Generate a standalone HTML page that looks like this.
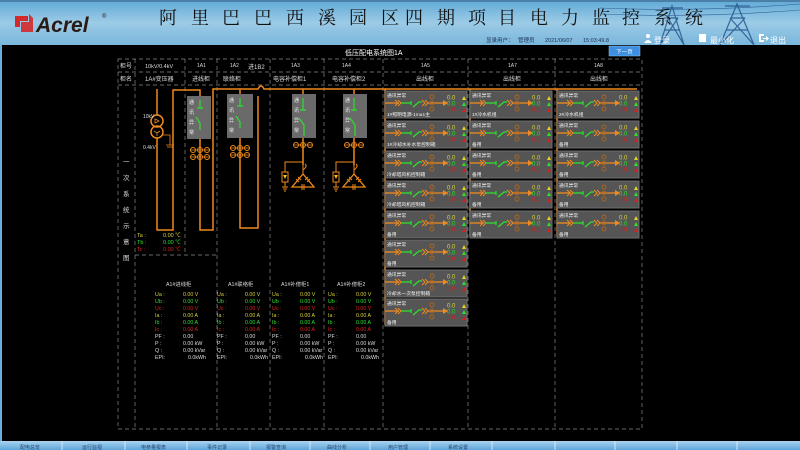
<!DOCTYPE html>
<html><head><meta charset="utf-8"><style>
html,body{margin:0;padding:0;background:#000;width:800px;height:450px;overflow:hidden}
svg{display:block}
text{font-family:"Liberation Sans","Noto Sans CJK SC",sans-serif}
</style></head><body>
<svg width="800" height="450" viewBox="0 0 800 450" xmlns="http://www.w3.org/2000/svg">
<defs>
<linearGradient id="hd" x1="0" y1="0" x2="0" y2="1"><stop offset="0" stop-color="#5fa9d6"/><stop offset="0.5" stop-color="#9ccbe6"/><stop offset="1" stop-color="#79b6dc"/></linearGradient>
<linearGradient id="ft" x1="0" y1="0" x2="0" y2="1"><stop offset="0" stop-color="#a9d3f0"/><stop offset="1" stop-color="#5ea6da"/></linearGradient>
<g id="cg">
<rect x="0" y="0" width="82" height="27" fill="#555" stroke="#6e6e6e" stroke-width="1"/>
<line x1="0" y1="12" x2="14" y2="12" stroke="#f08a1c" stroke-width="1.3"/>
<path d="M10 9 L13 12 L10 15 M13 9 L16 12 L13 15" stroke="#f08a1c" fill="none" stroke-width="1"/>
<line x1="16" y1="12" x2="26" y2="12" stroke="#2de02d" stroke-width="1.3"/>
<path d="M26 10 L26 14" stroke="#2de02d" stroke-width="1.2"/>
<path d="M28 16 L34 11 H37" stroke="#2de02d" fill="none" stroke-width="1.3"/>
<path d="M37 9 L40 12 L37 15 M40 9 L43 12 L40 15" stroke="#f08a1c" fill="none" stroke-width="1"/>
<line x1="43" y1="12" x2="60" y2="12" stroke="#f08a1c" stroke-width="1.3"/>
<path d="M58 9 L63 12 L58 15 Z" fill="#f08a1c"/>
<circle cx="47" cy="6" r="2" fill="none" stroke="#b0651e" stroke-width="0.9"/>
<circle cx="47" cy="12" r="2" fill="none" stroke="#b0651e" stroke-width="0.9"/>
<circle cx="47" cy="18" r="2" fill="none" stroke="#b0651e" stroke-width="0.9"/>
<path d="M77 9 L79 5 L81 9 Z" fill="#e6d21e"/>
<path d="M77 15 L79 11 L81 15 Z" fill="#2de02d"/>
<path d="M77 21 L79 17 L81 21 Z" fill="#d82020"/>
<text x="62" y="8.5" font-size="6" fill="#d8d23a">0.0</text>
<text x="62" y="14.5" font-size="6" fill="#2de02d">0.0</text>
<text x="62" y="20.5" font-size="6" fill="#d82020">0.0</text>
</g>
<g id="dots3"><circle cx="0" cy="0" r="2.5" fill="none" stroke="#f08a1c"/><circle cx="7" cy="0" r="2.5" fill="none" stroke="#f08a1c"/><circle cx="14" cy="0" r="2.5" fill="none" stroke="#f08a1c"/><path d="M-2.5 0 H16.5" stroke="#f08a1c" stroke-width="0.7"/></g>
<g id="cap">
<path d="M0 0 V12" stroke="#f08a1c" fill="none"/>
<path d="M0 12 q5 -4 2 -6" stroke="#f08a1c" fill="none"/>
<path d="M0 16 L-11 29 H11 Z" stroke="#f08a1c" fill="none" stroke-width="1.3"/>
<path d="M0 12 V16" stroke="#f08a1c"/>
<path d="M-7 21 l3 3 M-5 19 l3 3 M7 21 l-3 3 M5 19 l-3 3 M-1 26 v6 M1 26 v6" stroke="#f08a1c" stroke-width="1"/>
<path d="M0 4 H-18 V14" stroke="#f08a1c" fill="none"/>
<rect x="-21" y="14" width="6" height="10" fill="none" stroke="#f08a1c"/>
<path d="M-20 17 h4 l-2 4 z" fill="#f0c020"/>
<path d="M-18 24 V29 M-21 29 h6 M-20 31 h4 M-19 33 h2" stroke="#f08a1c"/>
</g>
</defs>

<!-- header -->
<rect x="0" y="0" width="800" height="45" fill="url(#hd)"/>
<rect x="0" y="0" width="800" height="2" fill="#4a7fa8"/>
<g stroke="#1d4e86" stroke-width="1.2" fill="none" opacity="0.8">
<path d="M660 45 L672 6 L684 45 M664 30 H680 M667 18 H678 M662 8 H683 M660 45 L678 18 M684 45 L668 18"/>
<path d="M720 45 L737 4 L754 45 M726 30 H748 M730 18 H745 M725 6 H750 M720 45 L745 18 M754 45 L730 18"/>
<path d="M600 8 Q700 12 800 4 M600 14 Q700 18 800 10" stroke-width="0.6"/>
</g>
<g>
<path d="M15 16 H28 V21 H20 V27 H15 Z" fill="#d32a2a"/>
<path d="M21 22 H29 V14 L33 18 V32 H21 Z" fill="#d32a2a" opacity="0.9"/>
<text x="36" y="32" font-size="21" font-weight="bold" font-style="italic" fill="#2a1a14">Acrel</text>
<text x="102" y="18" font-size="6" fill="#2a1a14">®</text>
</g>
<g font-size="18" fill="#111" font-family="'Liberation Serif','Noto Serif CJK SC',serif">
<text x="159" y="24" style="font-family:'Noto Serif CJK SC',serif">阿</text>
<text x="191" y="24" style="font-family:'Noto Serif CJK SC',serif">里</text>
<text x="222" y="24" style="font-family:'Noto Serif CJK SC',serif">巴</text>
<text x="254" y="24" style="font-family:'Noto Serif CJK SC',serif">巴</text>
<text x="286" y="24" style="font-family:'Noto Serif CJK SC',serif">西</text>
<text x="318" y="24" style="font-family:'Noto Serif CJK SC',serif">溪</text>
<text x="349" y="24" style="font-family:'Noto Serif CJK SC',serif">园</text>
<text x="381" y="24" style="font-family:'Noto Serif CJK SC',serif">区</text>
<text x="405" y="24" style="font-family:'Noto Serif CJK SC',serif">四</text>
<text x="437" y="24" style="font-family:'Noto Serif CJK SC',serif">期</text>
<text x="468" y="24" style="font-family:'Noto Serif CJK SC',serif">项</text>
<text x="498" y="24" style="font-family:'Noto Serif CJK SC',serif">目</text>
<text x="530" y="24" style="font-family:'Noto Serif CJK SC',serif">电</text>
<text x="561" y="24" style="font-family:'Noto Serif CJK SC',serif">力</text>
<text x="592" y="24" style="font-family:'Noto Serif CJK SC',serif">监</text>
<text x="622" y="24" style="font-family:'Noto Serif CJK SC',serif">控</text>
<text x="654" y="24" style="font-family:'Noto Serif CJK SC',serif">系</text>
<text x="685" y="24" style="font-family:'Noto Serif CJK SC',serif">统</text>
</g>
<g font-size="5.5" fill="#1a2f55">
<text x="486" y="42">显录用户：</text><text x="518" y="42">管理员</text>
<text x="545" y="42">2021/06/07</text><text x="583" y="42">15:03:49.8</text>
</g>
<g fill="#fff" font-size="8">
<circle cx="648" cy="36" r="2" /><path d="M644 43 q4 -6 8 0 z"/>
<text x="654" y="43">登录</text>
<rect x="699" y="34" width="7" height="8" fill="#fff"/>
<text x="710" y="43">最小化</text>
<path d="M759 34 h5 v2 h-3 v4 h3 v2 h-5 z M763 38 h3 v-2 l3 2.5 l-3 2.5 v-2 h-3 z"/>
<text x="770" y="43">退出</text>
</g>
<rect x="0" y="45" width="2" height="396" fill="#6aaedc"/>

<!-- title & button -->
<text x="345" y="55" font-size="7" fill="#fff">低压配电系统图1A</text>
<rect x="609" y="46" width="31" height="10" fill="#3f8fe0" stroke="#8cc4f4" stroke-width="0.5"/>
<text x="624.5" y="53.5" font-size="5.5" fill="#fff" text-anchor="middle">下一页</text>

<!-- grid -->
<g stroke="#8a8a8a" stroke-width="0.7" stroke-dasharray="4 3" fill="none">
<rect x="118" y="59" width="524" height="370"/>
<line x1="118" y1="72" x2="642" y2="72"/>
<line x1="118" y1="85" x2="642" y2="85"/>
<line x1="135" y1="59" x2="135" y2="429"/>
<line x1="185" y1="59" x2="185" y2="255"/>
<line x1="217" y1="59" x2="217" y2="429"/>
<line x1="270" y1="59" x2="270" y2="429"/>
<line x1="324" y1="59" x2="324" y2="429"/>
<line x1="383" y1="59" x2="383" y2="429"/>
<line x1="468" y1="59" x2="468" y2="429"/>
<line x1="555" y1="59" x2="555" y2="429"/>
<line x1="135" y1="255" x2="217" y2="255"/>
</g>
<g font-size="6" fill="#ddd">
<text x="120" y="68">柜号</text><text x="120" y="81">柜名</text>
<text x="145" y="68" font-family="'Liberation Serif',serif" font-size="5.5">10kV/0.4kV</text>
<text x="197" y="67" font-size="5">1A1</text>
<text x="230" y="67" font-size="5">1A2</text>
<text x="291" y="67" font-size="5">1A3</text>
<text x="342" y="67" font-size="5">1A4</text>
<text x="421" y="67" font-size="5">1A5</text>
<text x="508" y="67" font-size="5">1A7</text>
<text x="594" y="67" font-size="5">1A8</text>
<text x="145" y="81">1A#变压器</text>
<text x="192" y="81">进线柜</text>
<text x="223" y="81">联络柜</text>
<text x="248" y="69">进1B2</text>
<text x="273" y="81">电容补偿柜1</text>
<text x="332" y="81">电容补偿柜2</text>
<text x="416" y="81">出线柜</text>
<text x="503" y="81">出线柜</text>
<text x="590" y="81">出线柜</text>
</g>
<g font-size="6.5" fill="#ddd">
<text x="123" y="164">一</text><text x="123" y="180">次</text><text x="123" y="196">系</text><text x="123" y="212">统</text><text x="123" y="228">示</text><text x="123" y="244">意</text><text x="123" y="260">图</text>
</g>

<!-- primary diagram -->
<g stroke="#f08a1c" stroke-width="1.5" fill="none">
<path d="M157 89 V115"/>
<circle cx="157" cy="121" r="6"/><circle cx="157" cy="132" r="6"/>
<path d="M157 138 V230 H173 V90 H200 V230 H213 V89 H258 q3 -6 6 0 H637"/>
<path d="M240 89 V228 H258 V96"/>
<path d="M303 89 V165"/>
<path d="M354 89 V165"/>
<path d="M385 89 V325"/>
<path d="M470 89 V237"/>
<path d="M557 89 V237"/>
</g>
<path d="M155 119 l4 2 l-4 2 z M154 131 l3 2 l3 -2 M157 133 v3" stroke="#f08a1c" fill="none" stroke-width="0.8"/>
<path d="M163 135 H170 V145 M166 145 h8 M167 147 h6" stroke="#f08a1c" fill="none" stroke-width="0.8"/>
<text x="143" y="118" font-size="5" fill="#ddd">10kV</text>
<text x="143" y="149" font-size="5" fill="#ddd">0.4kV</text>
<!-- gray boxes -->
<g fill="#6a6a6a">
<rect x="187" y="96" width="24" height="43"/>
<rect x="227" y="94" width="26" height="44"/>
<rect x="292" y="94" width="24" height="44"/>
<rect x="343" y="94" width="24" height="44"/>
</g>
<g font-size="5" fill="#eee">
<text x="189" y="104">通</text><text x="189" y="114">讯</text><text x="189" y="124">异</text><text x="189" y="134">常</text>
<text x="229" y="102">通</text><text x="229" y="112">讯</text><text x="229" y="122">异</text><text x="229" y="132">常</text>
<text x="294" y="102">通</text><text x="294" y="112">讯</text><text x="294" y="122">异</text><text x="294" y="132">常</text>
<text x="345" y="102">通</text><text x="345" y="112">讯</text><text x="345" y="122">异</text><text x="345" y="132">常</text>
</g>
<g stroke="#2de02d" stroke-width="1.2" fill="none">
<path d="M200 100 V108 M197 108 h6 M196 117 l4 6 V130"/>
<path d="M240 98 V106 M237 106 h6 M236 116 l4 6 V128"/>
<path d="M303 98 V110 M300 110 h6 M299 118 l5 7 V136"/>
<path d="M354 98 V110 M351 110 h6 M350 118 l5 7 V136"/>
</g>
<use href="#dots3" x="193" y="150"/><use href="#dots3" x="193" y="157"/>
<use href="#dots3" x="233" y="148"/><use href="#dots3" x="233" y="155"/>
<use href="#dots3" x="296" y="145"/>
<use href="#dots3" x="347" y="145"/>
<use href="#cap" x="303" y="158"/>
<use href="#cap" x="354" y="158"/>
<g font-size="5.5">
<text x="137" y="237" fill="#d8d23a">Ta :</text><text x="163" y="237" fill="#d8d23a">0.00 ℃</text>
<text x="137" y="244" fill="#2de02d">Tb :</text><text x="163" y="244" fill="#2de02d">0.00 ℃</text>
<text x="137" y="251" fill="#d82020">Tc :</text><text x="163" y="251" fill="#d82020">0.00 ℃</text>
</g>

<!-- meters -->
<g font-size="5.3" font-family="'Liberation Serif','Noto Serif CJK SC',serif">
<text x="166" y="286" fill="#ddd">A1#进线柜</text>
<text x="228" y="286" fill="#ddd">A1#联络柜</text>
<text x="281" y="286" fill="#ddd">A1#补偿柜1</text>
<text x="337" y="286" fill="#ddd">A1#补偿柜2</text>
</g>
<g id="m1" font-size="5.3">
<text x="155" y="296" fill="#d8d23a">Ua :</text><text x="183" y="296" fill="#d8d23a">0.00 V</text>
<text x="155" y="303" fill="#2de02d">Ub :</text><text x="183" y="303" fill="#2de02d">0.00 V</text>
<text x="155" y="310" fill="#d82020">Uc :</text><text x="183" y="310" fill="#d82020">0.00 V</text>
<text x="155" y="317" fill="#d8d23a">Ia :</text><text x="183" y="317" fill="#d8d23a">0.00 A</text>
<text x="155" y="324" fill="#2de02d">Ib :</text><text x="183" y="324" fill="#2de02d">0.00 A</text>
<text x="155" y="331" fill="#d82020">Ic :</text><text x="183" y="331" fill="#d82020">0.00 A</text>
<text x="155" y="338" fill="#ddd">PF :</text><text x="183" y="338" fill="#ddd">0.00</text>
<text x="155" y="345" fill="#ddd">P :</text><text x="183" y="345" fill="#ddd">0.00 kW</text>
<text x="155" y="352" fill="#ddd">Q :</text><text x="183" y="352" fill="#ddd">0.00 kVar</text>
<text x="155" y="359" fill="#ddd">EPI:</text><text x="188" y="359" fill="#ddd">0.0kWh</text>
</g>
<g font-size="5.3" transform="translate(62,0)">
<text x="155" y="296" fill="#d8d23a">Ua :</text><text x="183" y="296" fill="#d8d23a">0.00 V</text>
<text x="155" y="303" fill="#2de02d">Ub :</text><text x="183" y="303" fill="#2de02d">0.00 V</text>
<text x="155" y="310" fill="#d82020">Uc :</text><text x="183" y="310" fill="#d82020">0.00 V</text>
<text x="155" y="317" fill="#d8d23a">Ia :</text><text x="183" y="317" fill="#d8d23a">0.00 A</text>
<text x="155" y="324" fill="#2de02d">Ib :</text><text x="183" y="324" fill="#2de02d">0.00 A</text>
<text x="155" y="331" fill="#d82020">Ic :</text><text x="183" y="331" fill="#d82020">0.00 A</text>
<text x="155" y="338" fill="#ddd">PF :</text><text x="183" y="338" fill="#ddd">0.00</text>
<text x="155" y="345" fill="#ddd">P :</text><text x="183" y="345" fill="#ddd">0.00 kW</text>
<text x="155" y="352" fill="#ddd">Q :</text><text x="183" y="352" fill="#ddd">0.00 kVar</text>
<text x="155" y="359" fill="#ddd">EPI:</text><text x="188" y="359" fill="#ddd">0.0kWh</text>
</g>
<g font-size="5.3" transform="translate(117,0)">
<text x="155" y="296" fill="#d8d23a">Ua :</text><text x="183" y="296" fill="#d8d23a">0.00 V</text>
<text x="155" y="303" fill="#2de02d">Ub :</text><text x="183" y="303" fill="#2de02d">0.00 V</text>
<text x="155" y="310" fill="#d82020">Uc :</text><text x="183" y="310" fill="#d82020">0.00 V</text>
<text x="155" y="317" fill="#d8d23a">Ia :</text><text x="183" y="317" fill="#d8d23a">0.00 A</text>
<text x="155" y="324" fill="#2de02d">Ib :</text><text x="183" y="324" fill="#2de02d">0.00 A</text>
<text x="155" y="331" fill="#d82020">Ic :</text><text x="183" y="331" fill="#d82020">0.00 A</text>
<text x="155" y="338" fill="#ddd">PF :</text><text x="183" y="338" fill="#ddd">0.00</text>
<text x="155" y="345" fill="#ddd">P :</text><text x="183" y="345" fill="#ddd">0.00 kW</text>
<text x="155" y="352" fill="#ddd">Q :</text><text x="183" y="352" fill="#ddd">0.00 kVar</text>
<text x="155" y="359" fill="#ddd">EPI:</text><text x="188" y="359" fill="#ddd">0.0kWh</text>
</g>
<g font-size="5.3" transform="translate(173,0)">
<text x="155" y="296" fill="#d8d23a">Ua :</text><text x="183" y="296" fill="#d8d23a">0.00 V</text>
<text x="155" y="303" fill="#2de02d">Ub :</text><text x="183" y="303" fill="#2de02d">0.00 V</text>
<text x="155" y="310" fill="#d82020">Uc :</text><text x="183" y="310" fill="#d82020">0.00 V</text>
<text x="155" y="317" fill="#d8d23a">Ia :</text><text x="183" y="317" fill="#d8d23a">0.00 A</text>
<text x="155" y="324" fill="#2de02d">Ib :</text><text x="183" y="324" fill="#2de02d">0.00 A</text>
<text x="155" y="331" fill="#d82020">Ic :</text><text x="183" y="331" fill="#d82020">0.00 A</text>
<text x="155" y="338" fill="#ddd">PF :</text><text x="183" y="338" fill="#ddd">0.00</text>
<text x="155" y="345" fill="#ddd">P :</text><text x="183" y="345" fill="#ddd">0.00 kW</text>
<text x="155" y="352" fill="#ddd">Q :</text><text x="183" y="352" fill="#ddd">0.00 kVar</text>
<text x="155" y="359" fill="#ddd">EPI:</text><text x="188" y="359" fill="#ddd">0.0kWh</text>
</g>

<!-- cards column 1A5 -->
<g font-size="4.8" fill="#f2f2f2">
<g transform="translate(385,91)"><use href="#cg"/><text x="2" y="6">通讯异常</text><text x="2" y="25">1#照明电源-1ma1主</text></g>
<g transform="translate(385,121)"><use href="#cg"/><text x="2" y="6">通讯异常</text><text x="2" y="25">1#冷却水补水泵控制箱</text></g>
<g transform="translate(385,151)"><use href="#cg"/><text x="2" y="6">通讯异常</text><text x="2" y="25">冷却塔风机控制箱</text></g>
<g transform="translate(385,181)"><use href="#cg"/><text x="2" y="6">通讯异常</text><text x="2" y="25">冷却塔风机控制箱</text></g>
<g transform="translate(385,211)"><use href="#cg"/><text x="2" y="6">通讯异常</text><text x="2" y="25">备用</text></g>
<g transform="translate(385,240)"><use href="#cg"/><text x="2" y="6">通讯异常</text><text x="2" y="25">备用</text></g>
<g transform="translate(385,270)"><use href="#cg"/><text x="2" y="6">通讯异常</text><text x="2" y="25">冷却水一次泵控制箱</text></g>
<g transform="translate(385,299)"><use href="#cg"/><text x="2" y="6">通讯异常</text><text x="2" y="25">备用</text></g>
<g transform="translate(470,91)"><use href="#cg"/><text x="2" y="6">通讯异常</text><text x="2" y="25">1#冷水机组</text></g>
<g transform="translate(470,121)"><use href="#cg"/><text x="2" y="6">通讯异常</text><text x="2" y="25">备用</text></g>
<g transform="translate(470,151)"><use href="#cg"/><text x="2" y="6">通讯异常</text><text x="2" y="25">备用</text></g>
<g transform="translate(470,181)"><use href="#cg"/><text x="2" y="6">通讯异常</text><text x="2" y="25">备用</text></g>
<g transform="translate(470,211)"><use href="#cg"/><text x="2" y="6">通讯异常</text><text x="2" y="25">备用</text></g>
<g transform="translate(557,91)"><use href="#cg"/><text x="2" y="6">通讯异常</text><text x="2" y="25">2#冷水机组</text></g>
<g transform="translate(557,121)"><use href="#cg"/><text x="2" y="6">通讯异常</text><text x="2" y="25">备用</text></g>
<g transform="translate(557,151)"><use href="#cg"/><text x="2" y="6">通讯异常</text><text x="2" y="25">备用</text></g>
<g transform="translate(557,181)"><use href="#cg"/><text x="2" y="6">通讯异常</text><text x="2" y="25">备用</text></g>
<g transform="translate(557,211)"><use href="#cg"/><text x="2" y="6">通讯异常</text><text x="2" y="25">备用</text></g>
</g>

<!-- footer -->
<rect x="0" y="441" width="800" height="9" fill="url(#ft)"/>
<g stroke="#e8f4fc" stroke-width="0.8">
<line x1="62" y1="441" x2="62" y2="450"/><line x1="125" y1="441" x2="125" y2="450"/><line x1="187" y1="441" x2="187" y2="450"/><line x1="250" y1="441" x2="250" y2="450"/><line x1="310" y1="441" x2="310" y2="450"/><line x1="370" y1="441" x2="370" y2="450"/><line x1="430" y1="441" x2="430" y2="450"/><line x1="492" y1="441" x2="492" y2="450"/><line x1="555" y1="441" x2="555" y2="450"/><line x1="615" y1="441" x2="615" y2="450"/><line x1="677" y1="441" x2="677" y2="450"/><line x1="737" y1="441" x2="737" y2="450"/>
</g>
<g font-size="5" fill="#24466e">
<text x="20" y="449">配电总览</text><text x="82" y="449">运行监视</text><text x="141" y="449">电参量报表</text><text x="207" y="449">事件记录</text><text x="266" y="449">报警查询</text><text x="327" y="449">曲线分析</text><text x="388" y="449">用户管理</text><text x="448" y="449">系统设置</text>
</g>
</svg>
</body></html>
